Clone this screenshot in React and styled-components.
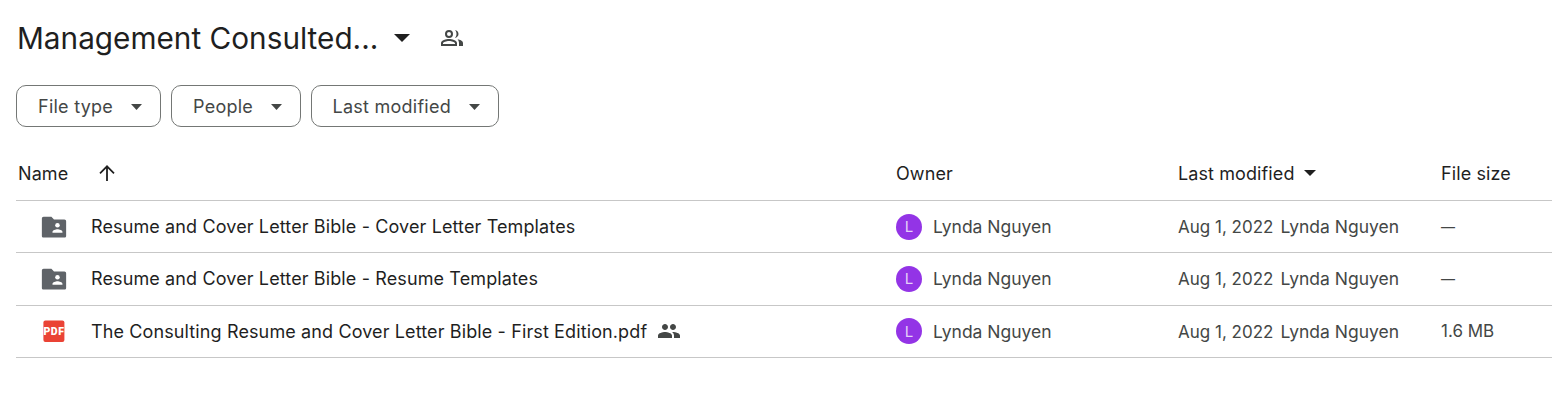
import React from "react";
import styled, { createGlobalStyle } from "styled-components";

const GlobalStyle = createGlobalStyle`
  html, body {
    margin: 0;
    background: #fff;
    font-family: "Inter", "Liberation Sans", sans-serif;
    color: #1f1f1f;
  }
`;

const Page = styled.div`
  padding: 0 0 0 16px;
`;

const TitleRow = styled.div`
  height: 75px;
  display: flex;
  align-items: center;
`;

const Title = styled.h1`
  margin: 0 0 0 1px;
  font-size: 29.75px;
  font-weight: 400;
  color: #1f1f1f;
`;

const TitleCaret = styled.svg`
  width: 16px;
  height: 8px;
  margin-left: 16px;
  fill: #1f1f1f;
`;

const SharedIcon = styled.svg`
  width: 24px;
  height: 24px;
  margin-left: 30px;
  fill: #444746;
`;

const Filters = styled.div`
  margin-top: 10px;
  display: flex;
  gap: 10px;
`;

const Chip = styled.button`
  height: 42px;
  width: ${(p) => p.$w}px;
  box-sizing: border-box;
  padding: 1px 18px 0 21px;
  display: flex;
  align-items: center;
  justify-content: space-between;
  background: #fff;
  border: 1px solid #747775;
  border-radius: 10px;
  font: 400 18px "Inter", sans-serif;
  letter-spacing: 0.25px;
  color: #444746;
`;

const ChipCaret = styled.svg`
  width: 11px;
  height: 6px;
  fill: #444746;
`;

const Row = styled.div`
  display: grid;
  grid-template-columns: 880px 282px 263px 1fr;
  align-items: center;
  height: ${(p) => p.$h || 52.33}px;
  padding-bottom: ${(p) => p.$pb || 0}px;
  box-sizing: border-box;
  border-bottom: 1px solid #c7c7c7;
`;

const Table = styled.div`
  margin-top: 22px;
`;

const HeadCell = styled.div`
  display: flex;
  align-items: center;
  font-size: 18px;
  letter-spacing: 0.1px;
  color: #1f1f1f;
  padding-left: ${(p) => p.$pad || 0}px;
`;

const SortArrow = styled.svg`
  width: 20px;
  height: 20px;
  margin-left: 29px;
  fill: #1f1f1f;
`;

const HeadCaret = styled.svg`
  width: 12px;
  height: 6px;
  margin-left: 9px;
  fill: #1f1f1f;
`;

const NameCell = styled.div`
  display: flex;
  align-items: center;
`;

const FileIcon = styled.svg`
  width: 26px;
  height: 26px;
  margin-left: 25px;
  flex: none;
`;

const FileName = styled.span`
  margin-left: 24px;
  font-size: 18px;
  letter-spacing: 0.12px;
  color: #1f1f1f;
`;

const PeopleIcon = styled.svg`
  width: 24px;
  height: 24px;
  margin-left: 10px;
  fill: #444746;
`;

const OwnerCell = styled.div`
  display: flex;
  align-items: center;
  font-size: 17.5px;
  color: #444746;
`;

const Avatar = styled.span`
  width: 26px;
  height: 26px;
  margin-right: 11px;
  border-radius: 50%;
  background: #9334e6;
  color: #e4d0f8;
  font-size: 15px;
  display: flex;
  align-items: center;
  justify-content: center;
`;

const Muted = styled.div`
  display: flex;
  align-items: baseline;
  gap: 7px;
  font-size: ${(p) => p.$size || 17}px;
  color: #444746;
`;

const Modifier = styled.span`
  font-size: 17.5px;
`;

const FolderShared = () => (
  <FileIcon viewBox="0 0 24 24">
    <path
      fill="#5f6368"
      d="M2.4 2.5h7.2L12 5h9.6c.9 0 1.6.7 1.6 1.6v13.6c0 .9-.7 1.6-1.6 1.6H2.4c-.9 0-1.6-.7-1.6-1.6V4.1c0-.9.7-1.6 1.6-1.6z"
    />
    <circle cx="15.2" cy="10.4" r="2.1" fill="#fff" />
    <path fill="#fff" d="M10.6 17.4v-.9c0-1.6 3-2.5 4.6-2.5s4.6.9 4.6 2.5v.9z" />
  </FileIcon>
);

const PdfIcon = () => (
  <FileIcon viewBox="0 0 26 26">
    <rect x="2.4" y="2.6" width="21" height="21.4" rx="2" fill="#ea4335" />
    <text
      x="13"
      y="17.2"
      textAnchor="middle"
      fontFamily="Roboto, sans-serif"
      fontWeight="900"
      fontSize="10.5"
      letterSpacing="0.6"
      fill="#fff"
    >
      PDF
    </text>
  </FileIcon>
);

const files = [
  { name: "Resume and Cover Letter Bible - Cover Letter Templates", size: "—" },
  { name: "Resume and Cover Letter Bible - Resume Templates", size: "—" },
  { name: "The Consulting Resume and Cover Letter Bible - First Edition.pdf", size: "1.6 MB", pdf: true },
];

const PEOPLE_PATH =
  "M16 11c1.66 0 2.99-1.34 2.99-3S17.66 5 16 5c-1.66 0-3 1.34-3 3s1.34 3 3 3zm-8 0c1.66 0 2.99-1.34 2.99-3S9.66 5 8 5C6.34 5 5 6.34 5 8s1.34 3 3 3zm0 2c-2.33 0-7 1.17-7 3.5V19h14v-2.5c0-2.33-4.67-3.5-7-3.5zm8 0c-.29 0-.62.02-.97.05 1.16.84 1.97 1.97 1.97 3.45V19h6v-2.5c0-2.33-4.67-3.5-7-3.5z";

const SHARED_PATH =
  "M9 4a4 4 0 1 0 0 8 4 4 0 0 0 0-8zm0 2a2 2 0 1 1 0 4 2 2 0 0 1 0-4zM9 13c-2.67 0-8 1.34-8 4v3h16v-3c0-2.66-5.33-4-8-4zm-6 5v-1c.2-.72 3.3-2 6-2s5.8 1.28 6 2v1zM15 4.1c1.9.3 3.5 1.9 3.5 3.9s-1.6 3.6-3.5 3.9c.9-1 1.5-2.4 1.5-3.9S15.9 5.1 15 4.1zM17.5 13.3c2.5.5 5.5 1.7 5.5 3.7v3h-4v-3c0-1.5-.6-2.7-1.5-3.7z";

const App = () => (
  <Page>
    <GlobalStyle />
    <TitleRow>
      <Title>Management Consulted...</Title>
      <TitleCaret viewBox="0 0 16 8">
        <path d="M0 0h16L8 8z" />
      </TitleCaret>
      <SharedIcon viewBox="0 0 24 24">
        <path fillRule="evenodd" d={SHARED_PATH} />
      </SharedIcon>
    </TitleRow>
    <Filters>
      <Chip $w={145}>
        File type
        <ChipCaret viewBox="0 0 11 6"><path d="M0 0h11L5.5 6z" /></ChipCaret>
      </Chip>
      <Chip $w={129.5}>
        People
        <ChipCaret viewBox="0 0 11 6"><path d="M0 0h11L5.5 6z" /></ChipCaret>
      </Chip>
      <Chip $w={188}>
        Last modified
        <ChipCaret viewBox="0 0 11 6"><path d="M0 0h11L5.5 6z" /></ChipCaret>
      </Chip>
    </Filters>
    <Table>
      <Row $h={52} $pb={3}>
        <HeadCell $pad={2}>
          Name
          <SortArrow viewBox="0 0 20 20">
            <path d="M9.1 18V5.4L3.6 10.9 2.4 9.7 10 2l7.6 7.7-1.2 1.2-5.5-5.5V18z" />
          </SortArrow>
        </HeadCell>
        <HeadCell>Owner</HeadCell>
        <HeadCell>
          Last modified
          <HeadCaret viewBox="0 0 12 6"><path d="M0 0h12L6 6z" /></HeadCaret>
        </HeadCell>
        <HeadCell>File size</HeadCell>
      </Row>
      {files.map((file) => (
        <Row key={file.name}>
          <NameCell>
            {file.pdf ? <PdfIcon /> : <FolderShared />}
            <FileName>{file.name}</FileName>
            {file.pdf && (
              <PeopleIcon viewBox="0 0 24 24">
                <path d={PEOPLE_PATH} />
              </PeopleIcon>
            )}
          </NameCell>
          <OwnerCell>
            <Avatar>L</Avatar>
            Lynda Nguyen
          </OwnerCell>
          <Muted>
            <span>Aug 1, 2022</span>
            <Modifier>Lynda Nguyen</Modifier>
          </Muted>
          <Muted $size={file.pdf ? 17 : 14}>{file.size}</Muted>
        </Row>
      ))}
    </Table>
  </Page>
);

export default App;
